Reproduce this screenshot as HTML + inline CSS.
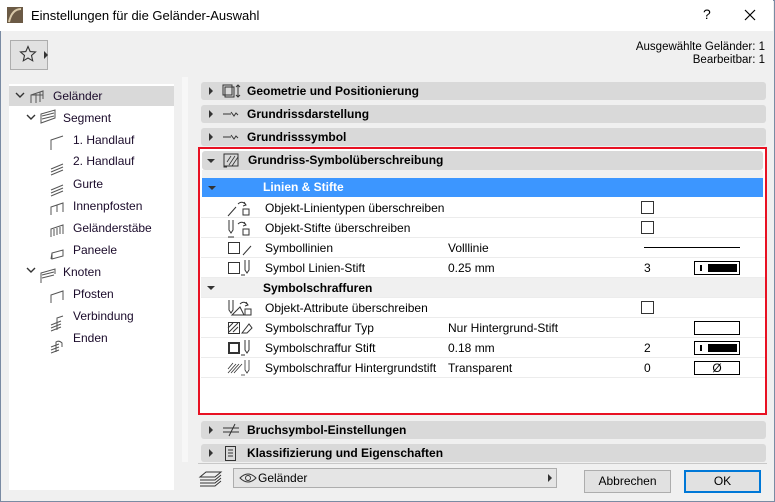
<!DOCTYPE html>
<html><head><meta charset="utf-8"><style>
*{box-sizing:border-box;margin:0;padding:0}
body{width:775px;height:502px;overflow:hidden;font-family:"Liberation Sans",sans-serif;font-size:12px;color:#000;background:#f0f0f0;position:relative}
.win{position:absolute;left:0;top:0;width:775px;height:502px;border:1px solid #7a8ba3}
.title{position:absolute;left:0;top:0;width:773px;height:31px;background:#fff}
.abs{position:absolute}
.tree{position:absolute;left:9px;top:84px;width:165px;height:406px;background:#fff}
.ti{position:absolute;height:20px;line-height:20px;font-size:12px;color:#1a0a2a;white-space:nowrap}
.hdr{position:absolute;left:201px;width:565px;height:18px;background:#d9d9d9;border-radius:3px;font-weight:bold;font-size:12px;line-height:18px}
.tri{position:absolute;width:0;height:0;border-top:4px solid transparent;border-bottom:4px solid transparent;border-left:4px solid #333}
.trd{position:absolute;width:0;height:0;border-left:4px solid transparent;border-right:4px solid transparent;border-top:4px solid #333}
.row{position:absolute;left:201px;width:564px;height:20px;line-height:20px;background:#fff;border-bottom:1px solid #ececec;white-space:nowrap}
.cb{position:absolute;width:13px;height:13px;border:1px solid #333;background:#fff}
.sw{position:absolute;left:493px;top:3px;width:46px;height:14px;border:1px solid #000;background:#fff}
.btn{position:absolute;height:23px;border:1px solid #adadad;background:#e1e1e1;text-align:center;line-height:21px}
</style></head><body>
<div class="win"></div>
<div class="title"></div>
<svg class="abs" style="left:7px;top:7px" width="16" height="16"><rect width="16" height="16" fill="#6b5a45"/><path d="M2 15 Q5 2 14 2" stroke="#d8c8a8" stroke-width="2" fill="none"/></svg>
<div class="abs" style="left:31px;top:8px;font-size:13px">Einstellungen für die Geländer-Auswahl</div>
<div class="abs" style="left:703px;top:6px;font-size:14px">?</div>
<svg class="abs" style="left:744px;top:9px" width="12" height="12"><path d="M1 1L11 11M11 1L1 11" stroke="#000" stroke-width="1.2"/></svg>

<div class="btn" style="left:10px;top:40px;width:38px;height:30px"></div>
<svg class="abs" style="left:19px;top:45px" width="18" height="18"><path d="M9 1.5L11.2 6.6 16.5 7 12.5 10.5 13.7 15.8 9 13 4.3 15.8 5.5 10.5 1.5 7 6.8 6.6Z" fill="none" stroke="#333" stroke-width="1.1"/></svg>
<div class="tri" style="left:44px;top:51px"></div>
<div class="abs" style="right:10px;top:41px;text-align:right;line-height:13px;font-size:11.5px">Ausgewählte Geländer: 1<br>Bearbeitbar: 1</div>

<div class="tree">
<div class="abs" style="left:0;top:2px;width:165px;height:20px;background:#d9d9d9"></div>
</div>
<svg class="abs" style="left:0;top:84px" width="175" height="270" fill="none" stroke="#555" stroke-width="1">
<path d="M16 9l4 4 4-4M27 31l4 4 4-4M27 184l4 4 4-4" stroke="#333" stroke-width="1.4"/>
<path d="M31 19V11l12-4v8M31 11h12M36 19V10M40 18V8"/>
<path d="M41 39V30l14-4v8zM42 32l12-3M42 35l12-3"/>
<path d="M51 66V56l12-4"/>
<path d="M51 85l12-5M51 88l12-5M51 91l12-5"/>
<path d="M51 106l12-5M51 109l12-5M51 112l12-5"/>
<path d="M51 131V123l12-4v9M57 128v-7"/>
<path d="M51 153V145l12-4v9M54 152v-7M57 151v-7M60 150v-7"/>
<path d="M52 175v-6l11-3v6zM52 169l-1 6"/>
<path d="M41 199V189l14-4v5M42 191l12-3M42 194l12-3"/>
<path d="M51 219V211l12-4v9"/>
<path d="M51 241l10-4M51 244l10-4M51 247l10-4M57 246v-12l6-2"/>
<path d="M51 263l8-3M51 266l8-3M51 269l8-3M56 268v-10q3-2 6 1v4"/>
</svg>
<div class="ti" style="left:53px;top:86px">Geländer</div>
<div class="ti" style="left:63px;top:108px">Segment</div>
<div class="ti" style="left:73px;top:130px">1. Handlauf</div>
<div class="ti" style="left:73px;top:151px">2. Handlauf</div>
<div class="ti" style="left:73px;top:174px">Gurte</div>
<div class="ti" style="left:73px;top:196px">Innenpfosten</div>
<div class="ti" style="left:73px;top:218px">Geländerstäbe</div>
<div class="ti" style="left:73px;top:240px">Paneele</div>
<div class="ti" style="left:63px;top:262px">Knoten</div>
<div class="ti" style="left:73px;top:284px">Pfosten</div>
<div class="ti" style="left:73px;top:306px">Verbindung</div>
<div class="ti" style="left:73px;top:328px">Enden</div>

<div class="abs" style="left:182px;top:77px;width:6px;height:385px;background:#f7f7f7"></div>

<div class="hdr" style="top:82px"><div class="tri" style="left:8px;top:5px"></div><span class="abs" style="left:46px">Geometrie und Positionierung</span></div>
<svg class="abs" style="left:221px;top:83px" width="20" height="16" fill="none" stroke="#333"><rect x="2" y="2" width="9" height="10"/><rect x="4" y="4" width="9" height="10"/><path d="M17 2v12M15 4l2-2 2 2M15 12l2 2 2-2"/></svg>
<div class="hdr" style="top:105px"><div class="tri" style="left:8px;top:5px"></div><span class="abs" style="left:46px">Grundrissdarstellung</span></div>
<div class="hdr" style="top:128px"><div class="tri" style="left:8px;top:5px"></div><span class="abs" style="left:46px">Grundrisssymbol</span></div>
<svg class="abs" style="left:221px;top:106px" width="20" height="40" stroke="#333"><path d="M2 8h8M10 6l3 4 2-3 2 2M2 31h8M10 29l3 4 2-3 2 2" fill="none"/></svg>

<div class="abs" style="left:198px;top:147px;width:569px;height:268px;border:2px solid #e81123;background:#fff"></div>
<div class="hdr" style="top:151px;height:19px;left:202px;width:561px"><div class="trd" style="left:5px;top:8px"></div><span class="abs" style="left:46px;line-height:19px">Grundriss-Symbolüberschreibung</span></div>
<svg class="abs" style="left:222px;top:152px" width="18" height="17" fill="none" stroke="#333"><rect x="2" y="2" width="14" height="12"/><path d="M7 13l6-9M10 14l6-9M5 10l4-6" stroke-width=".8"/><path d="M2 6v9h3"/></svg>
<div class="abs" style="left:202px;top:170px;width:561px;height:8px;background:#f0f0f0"></div>
<div class="row" style="top:178px;left:202px;width:561px;background:#3c96ff;color:#fff;font-weight:bold;border:0;height:19px;line-height:19px"><div class="trd" style="left:6px;top:8px;border-top-color:#333"></div><span class="abs" style="left:61px">Linien &amp; Stifte</span></div>

<div class="row" style="top:198px"><span class="abs" style="left:64px">Objekt-Linientypen überschreiben</span><div class="cb" style="left:440px;top:3px"></div></div>
<div class="row" style="top:218px"><span class="abs" style="left:64px">Objekt-Stifte überschreiben</span><div class="cb" style="left:440px;top:3px"></div></div>
<div class="row" style="top:238px"><span class="abs" style="left:64px">Symbollinien</span><span class="abs" style="left:247px">Volllinie</span><div class="abs" style="left:443px;top:9px;width:96px;height:1px;background:#000"></div></div>
<div class="row" style="top:258px"><span class="abs" style="left:64px">Symbol Linien-Stift</span><span class="abs" style="left:247px">0.25 mm</span><span class="abs" style="left:443px">3</span><div class="sw"><div class="abs" style="left:5px;top:3px;width:2px;height:6px;background:#000"></div><div class="abs" style="left:13px;top:2px;width:29px;height:8px;background:#000"></div></div></div>
<div class="row" style="top:278px;background:#f0f0f0;font-weight:bold"><div class="trd" style="left:6px;top:8px"></div><span class="abs" style="left:62px">Symbolschraffuren</span></div>
<div class="row" style="top:298px"><span class="abs" style="left:64px">Objekt-Attribute überschreiben</span><div class="cb" style="left:440px;top:3px"></div></div>
<div class="row" style="top:318px"><span class="abs" style="left:64px">Symbolschraffur Typ</span><span class="abs" style="left:247px">Nur Hintergrund-Stift</span><div class="sw"></div></div>
<div class="row" style="top:338px"><span class="abs" style="left:64px">Symbolschraffur Stift</span><span class="abs" style="left:247px">0.18 mm</span><span class="abs" style="left:443px">2</span><div class="sw"><div class="abs" style="left:5px;top:3px;width:2px;height:6px;background:#000"></div><div class="abs" style="left:13px;top:2px;width:29px;height:8px;background:#000"></div></div></div>
<div class="row" style="top:358px"><span class="abs" style="left:64px">Symbolschraffur Hintergrundstift</span><span class="abs" style="left:247px">Transparent</span><span class="abs" style="left:443px">0</span><div class="sw" style="text-align:center;line-height:12px;font-size:12px">Ø</div></div>

<svg class="abs" style="left:226px;top:198px;z-index:5" width="34" height="180" fill="none" stroke="#333" stroke-width="1">
<path d="M2 18l8-9M12 6q4-4 8 1M18 4l2 3-3 1"/><rect x="17" y="11" width="6" height="6"/>
<path d="M3 22v10l2 3 2-3V22M2 39h6M12 26q4-4 8 1M18 24l2 3-3 1"/><rect x="17" y="31" width="6" height="6"/>
<rect x="2.5" y="44.5" width="11" height="11"/><path d="M17 57l8-9"/>
<rect x="2.5" y="64.5" width="11" height="11"/><path d="M19 62v10l2 3 2-3v-10M15 77h4"/>
<path d="M3 102v10l2 3 2-3v-10M14 106q4-4 8 1M20 104l2 3-3 1M6 117l8-8 4 8z"/><rect x="19" y="111" width="6" height="6"/>
<rect x="2.5" y="124.5" width="11" height="11"/><path d="M3 134l9-9M2 130l5-5M7 134l5-5M16 135l7-9 3 4-5 5z"/>
<rect x="3" y="145" width="10" height="10" stroke-width="2"/><path d="M19 142v10l2 3 2-3v-10M15 157h4"/>
<path d="M2 175l8-9M5 175l8-9M8 175l8-9M2 171l5-6M19 162v10l2 3 2-3v-10M15 177h4" stroke-width=".8"/>
</svg>

<div class="hdr" style="top:421px"><div class="tri" style="left:8px;top:5px"></div><span class="abs" style="left:46px">Bruchsymbol-Einstellungen</span></div>
<svg class="abs" style="left:222px;top:422px" width="20" height="16" stroke="#333" fill="none"><path d="M1 6h16M1 10h16M7 14l6-12"/></svg>
<div class="hdr" style="top:444px"><div class="tri" style="left:8px;top:5px"></div><span class="abs" style="left:46px">Klassifizierung und Eigenschaften</span></div>
<svg class="abs" style="left:224px;top:445px" width="14" height="17" stroke="#333" fill="none"><rect x="1.5" y="1.5" width="10" height="14"/><path d="M4 5h5M4 8h5M4 11h5"/></svg>
<div class="abs" style="left:198px;top:463px;width:569px;height:1px;background:#c8c8c8"></div>

<svg class="abs" style="left:198px;top:469px" width="26" height="20" stroke="#333" fill="none"><path d="M2 8l6-5h15l-6 5zM2 11h15l6-5M2 14h15l6-5M2 17h15l6-5"/></svg>
<div class="btn" style="left:233px;top:468px;width:324px;height:20px;background:#e5e5e5"></div>
<svg class="abs" style="left:239px;top:472px" width="18" height="12" stroke="#333" fill="none"><path d="M1 6q8-8 16 0q-8 8-16 0z"/><circle cx="9" cy="6" r="2.5"/></svg>
<div class="abs" style="left:258px;top:471px">Geländer</div>
<div class="tri" style="left:548px;top:474px"></div>
<div class="btn" style="left:584px;top:470px;width:87px">Abbrechen</div>
<div class="btn" style="left:684px;top:470px;width:77px;border:2px solid #0078d7;line-height:19px">OK</div>
</body></html>
